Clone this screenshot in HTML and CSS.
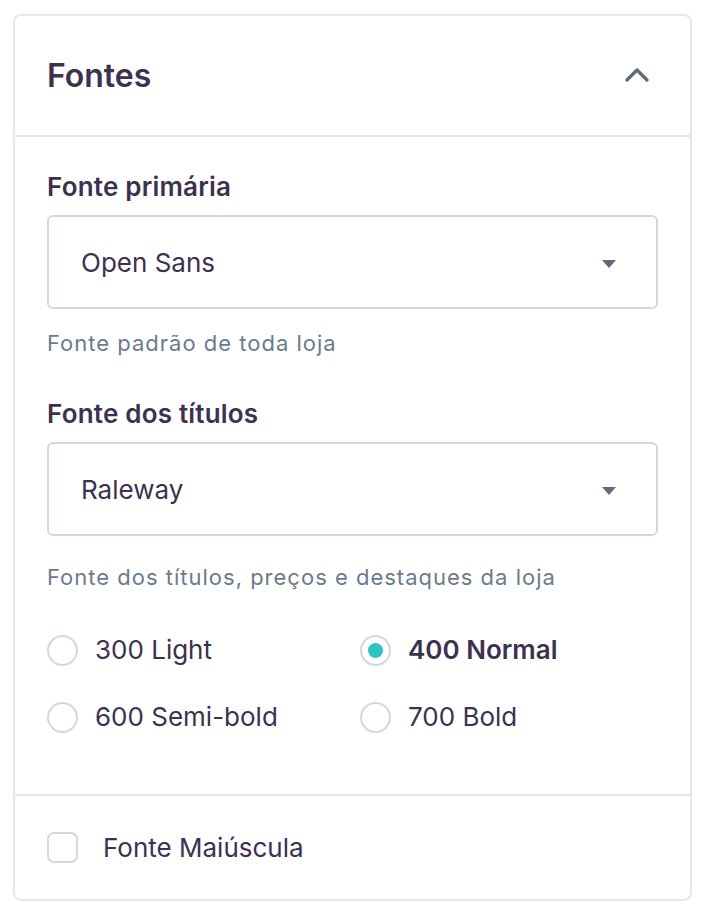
FILE: index.html
```html
<!DOCTYPE html>
<html lang="pt">
<head>
<meta charset="utf-8">
<link rel="stylesheet" href="styles.css">
</head>
<body>
<div class="card">
  <div class="card-header">
    <h2 class="title">Fontes</h2>
    <svg class="chevron" width="26" height="16" viewBox="0 0 26 16"><path d="M3 13 L13 3 L23 13" fill="none" stroke="#5d6d7e" stroke-width="3.4" stroke-linecap="round" stroke-linejoin="round"/></svg>
  </div>
  <div class="card-body">
    <div class="label">Fonte primária</div>
    <div class="select"><span>Open Sans</span><span class="caret"></span></div>
    <div class="helper h1">Fonte padrão de toda loja</div>
    <div class="label l2">Fonte dos títulos</div>
    <div class="select"><span>Raleway</span><span class="caret"></span></div>
    <div class="helper h2">Fonte dos títulos, preços e destaques da loja</div>
    <div class="radios">
      <div class="radio"><span class="circle"></span><span>300 Light</span></div>
      <div class="radio checked"><span class="circle"></span><span>400 Normal</span></div>
      <div class="radio"><span class="circle"></span><span>600 Semi-bold</span></div>
      <div class="radio"><span class="circle"></span><span>700 Bold</span></div>
    </div>
  </div>
  <div class="card-footer">
    <span class="checkbox"></span><span class="check-label">Fonte Maiúscula</span>
  </div>
</div>
</body>
</html>
```
FILE: styles.css
```css
* { box-sizing: border-box; }
body {
  margin: 0;
  padding: 14px 24px 9px 13px;
  background: #fff;
  font-family: Inter, "Noto Sans", sans-serif;
  color: #3d3150;
}
.card {
  border: 2px solid #e7e7e9;
  border-radius: 8px;
  background: #fff;
}
.card-header {
  height: 121px;
  display: flex;
  align-items: center;
  justify-content: space-between;
  padding: 0 40px 0 32px;
  border-bottom: 2px solid #e7e7e9;
}
.title {
  margin: 0;
  font-size: 32px;
  font-weight: 600;
  color: #3d3150;
}
.chevron { display: block; margin-top: -2px; }
.card-body {
  padding: 34px 32px 61px;
}
.label {
  font-size: 26px;
  line-height: 32px;
  font-weight: 600;
  letter-spacing: 0.2px;
  color: #3d3150;
  margin-bottom: 12px;
}
.l2 { margin-top: 41px; }
.select {
  height: 94px;
  border: 2px solid #d3d8dd;
  border-radius: 6px;
  display: flex;
  align-items: center;
  justify-content: space-between;
  padding: 0 40px 0 32px;
  font-size: 26px;
  color: #3d3150;
}
.caret {
  width: 0;
  height: 0;
  border-left: 7px solid transparent;
  border-right: 7px solid transparent;
  border-top: 8px solid #5d6d7e;
  margin-top: 3px;
}
.helper {
  font-size: 22px;
  line-height: 28px;
  letter-spacing: 1px;
  color: #6b7b8b;
}
.h1 { margin-top: 20px; }
.h2 { margin-top: 27px; }
.radios {
  margin-top: 43px;
  display: grid;
  grid-template-columns: 313px 1fr;
  row-gap: 35px;
}
.radio {
  display: flex;
  align-items: center;
  gap: 17px;
  font-size: 26px;
  line-height: 32px;
  color: #3d3150;
}
.circle {
  width: 31px;
  height: 31px;
  border: 2px solid #d3d8dd;
  border-radius: 50%;
  display: flex;
  align-items: center;
  justify-content: center;
  flex: none;
}
.radio.checked { font-weight: 600; }
.radio.checked .circle::after {
  content: "";
  width: 15px;
  height: 15px;
  border-radius: 50%;
  background: #2ec4c1;
}
.card-footer {
  border-top: 2px solid #e7e7e9;
  height: 105px;
  display: flex;
  align-items: center;
  padding: 0 32px;
}
.checkbox {
  width: 31px;
  height: 31px;
  border: 2px solid #d3d8dd;
  border-radius: 7px;
  flex: none;
}
.check-label {
  margin-left: 25px;
  font-size: 26px;
  color: #3d3150;
}
```
